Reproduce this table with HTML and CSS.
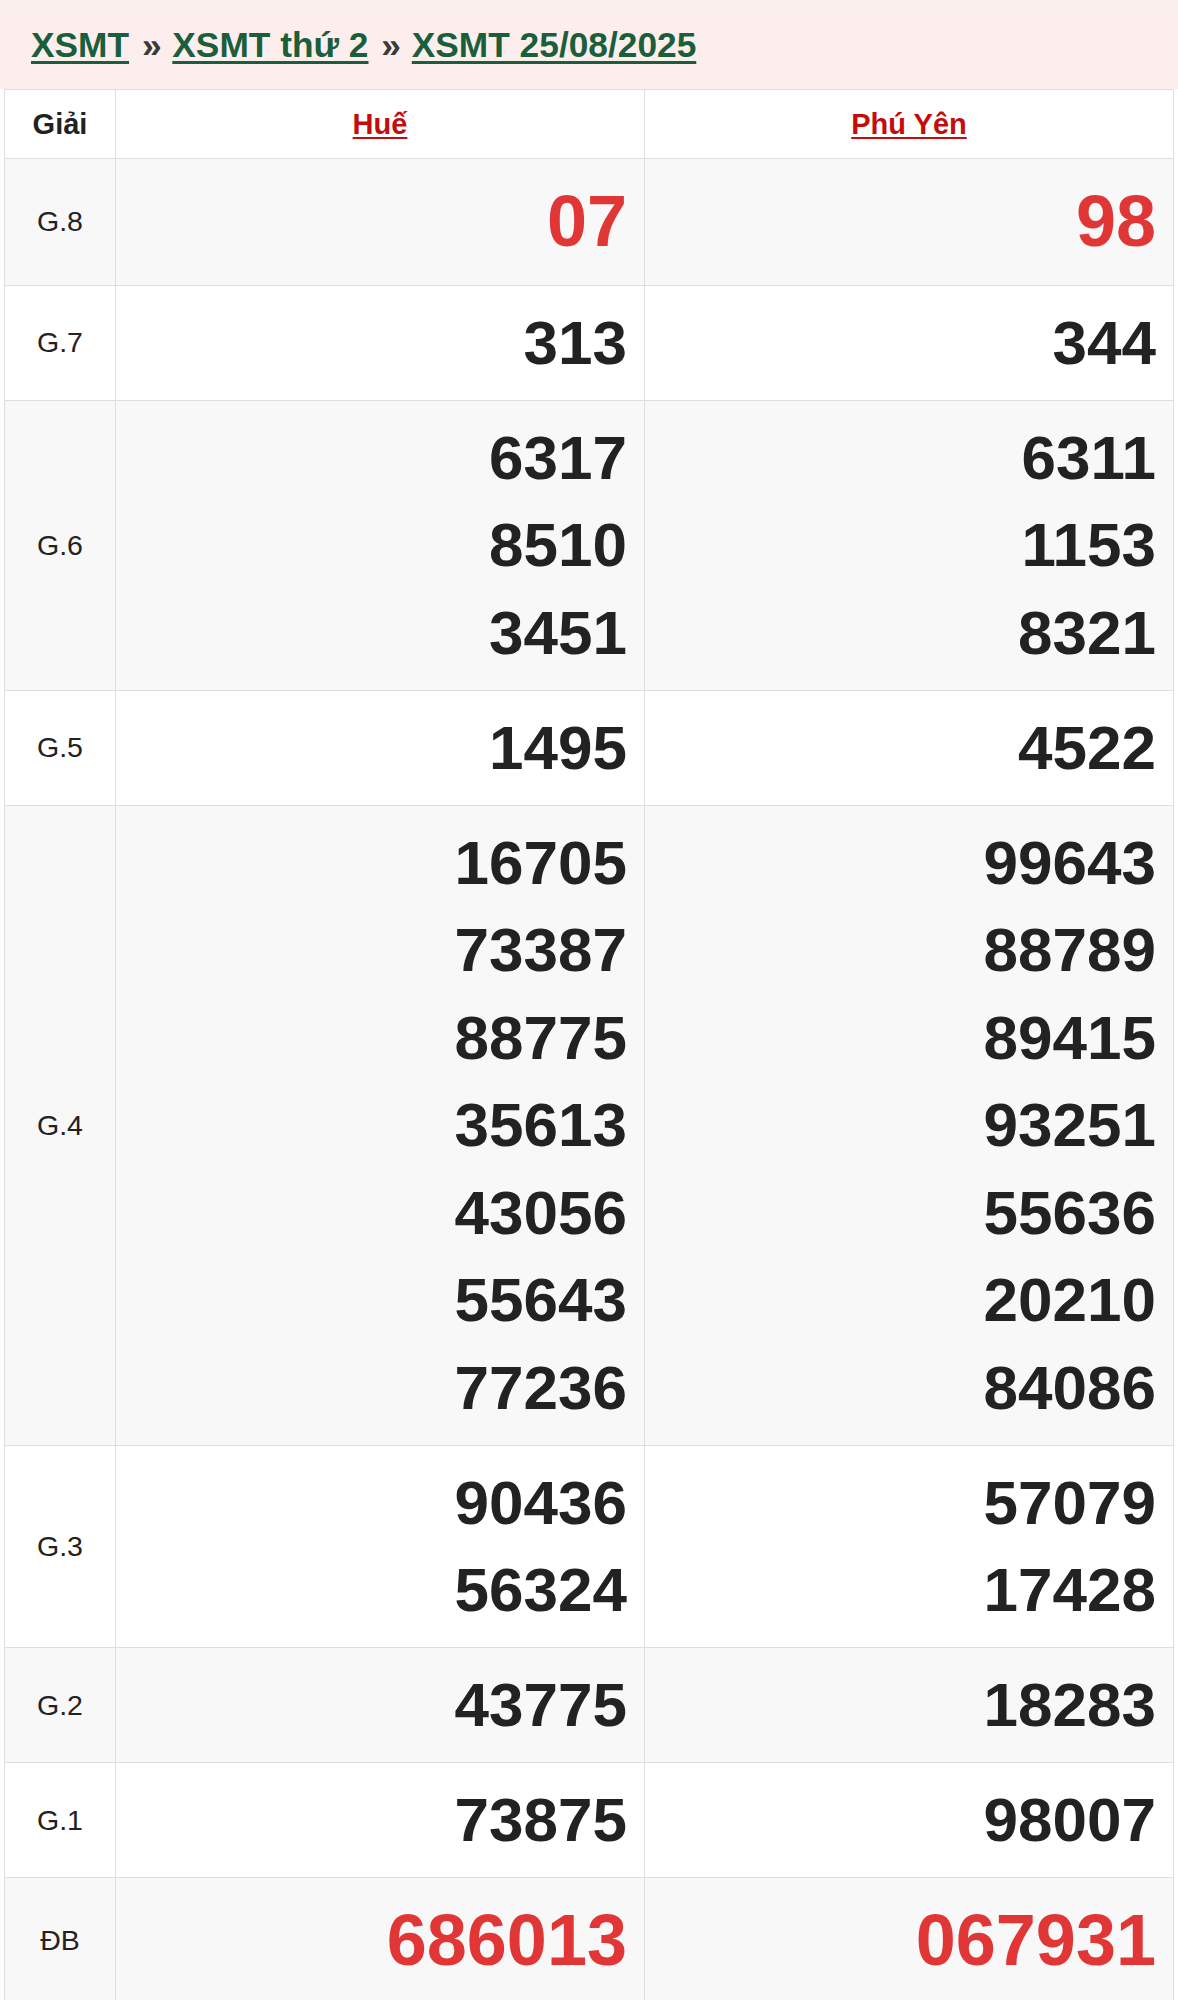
FILE: index.html
```html
<!DOCTYPE html>
<html lang="vi">
<head>
<meta charset="utf-8">
<title>XSMT 25/08/2025</title>
<link rel="stylesheet" href="styles.css">
</head>
<body>
<div class="page">
  <nav class="crumbs">
    <a href="#" class="crumb">XSMT</a>
    <span class="sep">»</span>
    <a href="#" class="crumb">XSMT thứ 2</a>
    <span class="sep">»</span>
    <a href="#" class="crumb">XSMT 25/08/2025</a>
  </nav>
  <table class="results">
    <colgroup>
      <col class="c-label">
      <col class="c-prov">
      <col class="c-prov">
    </colgroup>
    <thead>
      <tr>
        <th class="lbl-head">Giải</th>
        <th><a href="#" class="prov">Huế</a></th>
        <th><a href="#" class="prov">Phú Yên</a></th>
      </tr>
    </thead>
    <tbody>
      <tr class="alt big">
        <td class="lbl">G.8</td>
        <td class="num red"><div>07</div></td>
        <td class="num red"><div>98</div></td>
      </tr>
      <tr>
        <td class="lbl">G.7</td>
        <td class="num"><div>313</div></td>
        <td class="num"><div>344</div></td>
      </tr>
      <tr class="alt">
        <td class="lbl">G.6</td>
        <td class="num"><div>6317</div><div>8510</div><div>3451</div></td>
        <td class="num"><div>6311</div><div>1153</div><div>8321</div></td>
      </tr>
      <tr>
        <td class="lbl">G.5</td>
        <td class="num"><div>1495</div></td>
        <td class="num"><div>4522</div></td>
      </tr>
      <tr class="alt">
        <td class="lbl">G.4</td>
        <td class="num"><div>16705</div><div>73387</div><div>88775</div><div>35613</div><div>43056</div><div>55643</div><div>77236</div></td>
        <td class="num"><div>99643</div><div>88789</div><div>89415</div><div>93251</div><div>55636</div><div>20210</div><div>84086</div></td>
      </tr>
      <tr>
        <td class="lbl">G.3</td>
        <td class="num"><div>90436</div><div>56324</div></td>
        <td class="num"><div>57079</div><div>17428</div></td>
      </tr>
      <tr class="alt">
        <td class="lbl">G.2</td>
        <td class="num"><div>43775</div></td>
        <td class="num"><div>18283</div></td>
      </tr>
      <tr>
        <td class="lbl">G.1</td>
        <td class="num"><div>73875</div></td>
        <td class="num"><div>98007</div></td>
      </tr>
      <tr class="alt big">
        <td class="lbl">ĐB</td>
        <td class="num red"><div>686013</div></td>
        <td class="num red"><div>067931</div></td>
      </tr>
    </tbody>
  </table>
</div>
</body>
</html>
```
FILE: styles.css
```css
html, body {
  margin: 0;
  padding: 0;
  background: #ffffff;
}

body {
  font-family: "Liberation Sans", Arial, sans-serif;
  color: #222222;
}

.page {
  width: 1178px;
}

.crumbs {
  background: #fdeeee;
  height: 89px;
  line-height: 85px;
  padding: 0 0 4px 31px;
  box-sizing: border-box;
  border-top: 2px solid #f6f0f0;
  font-size: 35.3px;
  font-weight: bold;
  white-space: nowrap;
}

.crumb {
  color: #1b5e3b;
  text-decoration: underline;
  text-decoration-thickness: 3px;
  text-underline-offset: 4px;
}

.sep {
  color: #3a3a3a;
  margin: 0 1px 0 3px;
}

.results {
  width: 1170px;
  margin: 0 4px;
  border-collapse: collapse;
  table-layout: fixed;
}

.c-label {
  width: 111px;
}

.results th,
.results td {
  border: 1px solid #dedede;
  vertical-align: middle;
}

.results th {
  height: 68px;
  padding: 0;
  font-size: 29px;
  font-weight: bold;
  text-align: center;
  background: #ffffff;
  color: #222222;
}

.prov {
  color: #c40c0c;
  font-size: 29px;
  text-decoration: underline;
  text-decoration-thickness: 2px;
  text-underline-offset: 3px;
}

.alt td {
  background: #f8f8f8;
}

.lbl {
  text-align: center;
  font-size: 28.5px;
  color: #222222;
  padding: 0;
}

.num {
  text-align: right;
  padding: 13px 17px 13.5px 10px;
  font-size: 62px;
  font-weight: bold;
  line-height: 87.5px;
  color: #222222;
}

.big .num {
  font-size: 72px;
  line-height: 99px;
}

.num.red {
  color: #e13636;
}
```
